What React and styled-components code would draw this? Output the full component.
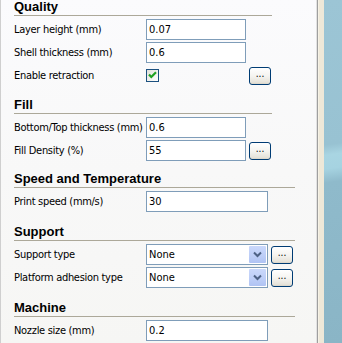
import React from 'react';
import styled, { createGlobalStyle } from 'styled-components';

const GlobalStyle = createGlobalStyle`
  html, body {
    margin: 0;
    padding: 0;
  }
  body {
    width: 342px;
    height: 343px;
    overflow: hidden;
    font-family: "DejaVu Sans Condensed", "DejaVu Sans", sans-serif;
    font-size: 11px;
    color: #000;
  }
`;

const Window = styled.div`
  display: flex;
  width: 342px;
  height: 343px;
  overflow: hidden;
`;

const Panel = styled.div`
  box-sizing: border-box;
  width: 318px;
  height: 100%;
  padding-left: 13px;
  border-left: 1px solid #cfcfcf;
  border-right: 1px solid #9f9f9f;
  box-shadow: inset -1px 0 0 #e2e2e2;
  background: linear-gradient(180deg, #fbfbfd 0%, #f8f8f8 50%, #f6f6f4 100%);
  display: flex;
  flex-direction: column;
`;

const Frame = styled.div`
  width: 6px;
  background: #eee8d8;
  box-shadow: inset 1px 0 0 #f6f2e6;
`;

const Viewport = styled.div`
  flex: 1;
  background: linear-gradient(
    172deg,
    #9cc5d5 0%,
    #98c2d2 42%,
    #a9d5e2 45%,
    #a6d3e1 49%,
    #8fbacb 53%,
    #8ab5c6 100%
  );
`;

const Section = styled.section`
  width: ${p => (p.$wide ? 281 : 258)}px;
  margin-top: ${p => p.$space ?? 0}px;
`;

const Heading = styled.h2`
  margin: 0;
  height: 15px;
  line-height: 14px;
  font-family: "Liberation Sans", Arial, sans-serif;
  font-size: 13px;
  font-weight: bold;
  border-bottom: 1px solid #aca899;
`;

const Rows = styled.div`
  display: grid;
  grid-template-columns: 129px auto auto;
  grid-auto-rows: 21px;
  row-gap: 2px;
  column-gap: 3px;
  align-items: center;
  justify-content: start;
  padding-top: 3px;
`;

const Label = styled.span`
  grid-column: 1;
  white-space: nowrap;
  letter-spacing: -0.3px;
`;

const Field = styled.div`
  box-sizing: border-box;
  grid-column: 2;
  width: ${p => (p.$wide ? 122 : 100)}px;
  height: 21px;
  padding: 0 2px;
  border: 1px solid #7f9db9;
  background: #fff;
  display: flex;
  align-items: center;
  line-height: 19px;
`;

const SelectBox = styled(Field)`
  padding-right: 1px;
  justify-content: space-between;
`;

const Arrow = styled.span`
  width: 17px;
  height: 17px;
  border-radius: 1px;
  background: linear-gradient(180deg, #cad8fb 0%, #bccdf7 60%, #b0c3f3 100%);
  display: flex;
  align-items: center;
  justify-content: center;
`;

const DotsButton = styled.button`
  grid-column: 3;
  box-sizing: border-box;
  width: 22px;
  height: 18px;
  padding: 0 0 3px;
  border: 1px solid #003c74;
  border-radius: 3px;
  background: linear-gradient(180deg, #ffffff 0%, #f5f4f0 50%, #e6e3da 90%, #d8d3c6 100%);
  font-family: inherit;
  font-size: 10px;
  font-weight: normal;
  line-height: 10px;
  color: #000;
`;

const Check = styled.span`
  grid-column: 2;
  box-sizing: border-box;
  width: 13px;
  height: 13px;
  border: 1px solid #1c5180;
  background: linear-gradient(135deg, #e0e0da 0%, #f4f4f0 60%, #ffffff 100%);
  display: flex;
  align-items: center;
  justify-content: center;
`;

const Checkmark = () => (
  <svg width="11" height="11" viewBox="0 0 11 11">
    <path d="M2 4.5 L4.3 7 L9 2.3" fill="none" stroke="#21a121" strokeWidth="2.2" />
  </svg>
);

const Chevron = () => (
  <svg width="9" height="7" viewBox="0 0 9 7">
    <path d="M1 1.5 L4.5 5 L8 1.5" fill="none" stroke="#4d6185" strokeWidth="2" />
  </svg>
);

const TextRow = ({ label, value, wide, more }) => (
  <>
    <Label>{label}</Label>
    <Field $wide={wide}>{value}</Field>
    {more && <DotsButton>...</DotsButton>}
  </>
);

const SelectRow = ({ label, value }) => (
  <>
    <Label>{label}</Label>
    <SelectBox $wide>
      {value}
      <Arrow><Chevron /></Arrow>
    </SelectBox>
    <DotsButton>...</DotsButton>
  </>
);

export default function App() {
  return (
    <Window>
      <GlobalStyle />
      <Panel>
        <Section>
          <Heading>Quality</Heading>
          <Rows>
            <TextRow label="Layer height (mm)" value="0.07" />
            <TextRow label="Shell thickness (mm)" value="0.6" />
            <Label>Enable retraction</Label>
            <Check><Checkmark /></Check>
            <DotsButton>...</DotsButton>
          </Rows>
        </Section>
        <Section $space={12}>
          <Heading>Fill</Heading>
          <Rows>
            <TextRow label="Bottom/Top thickness (mm)" value="0.6" />
            <TextRow label="Fill Density (%)" value="55" more />
          </Rows>
        </Section>
        <Section $wide $space={11}>
          <Heading>Speed and Temperature</Heading>
          <Rows>
            <TextRow label="Print speed (mm/s)" value="30" wide />
          </Rows>
        </Section>
        <Section $wide $space={13}>
          <Heading>Support</Heading>
          <Rows>
            <SelectRow label="Support type" value="None" />
            <SelectRow label="Platform adhesion type" value="None" />
          </Rows>
        </Section>
        <Section $wide $space={13}>
          <Heading>Machine</Heading>
          <Rows>
            <TextRow label="Nozzle size (mm)" value="0.2" wide />
          </Rows>
        </Section>
      </Panel>
      <Frame />
      <Viewport />
    </Window>
  );
}
